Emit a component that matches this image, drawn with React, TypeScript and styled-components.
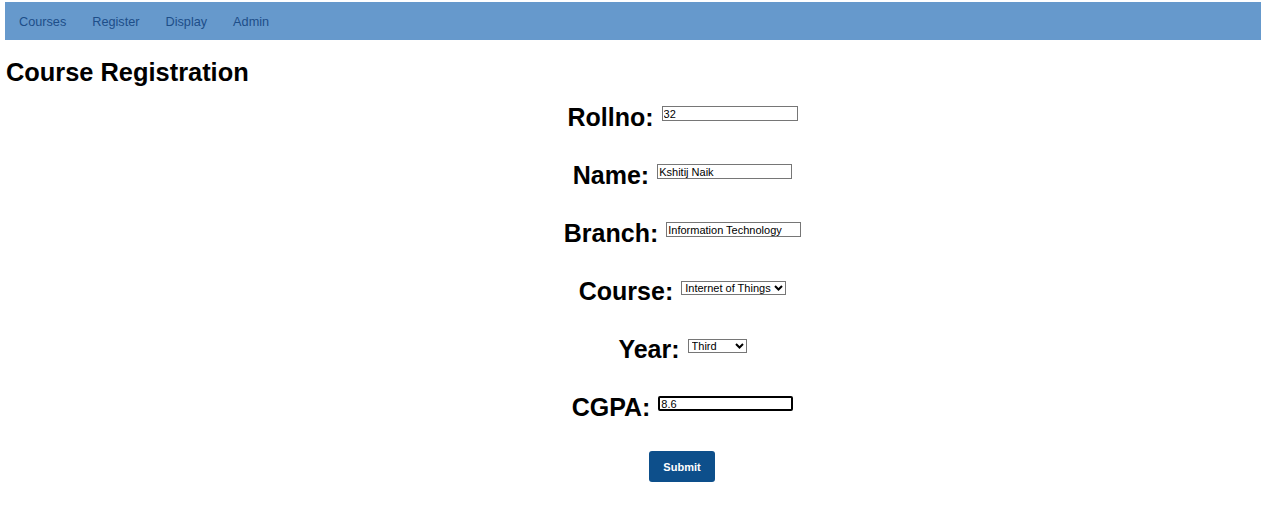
import React from "react";
import styled, { createGlobalStyle } from "styled-components";

const Global = createGlobalStyle`
  html, body { margin: 0; padding: 0; background: #fff; }
  body { font-family: "Liberation Sans", Arial, sans-serif; color: #000; }
`;

const Nav = styled.nav`
  display: flex;
  align-items: center;
  box-sizing: border-box;
  height: 38px;
  margin: 2px 0 0 5px;
  padding: 2px 0 0 1px;
  background: #6699cc;
`;

const NavLink = styled.a`
  padding: 0 13px;
  font-size: 12.7px;
  color: #1d4e89;
  text-decoration: none;
  cursor: pointer;
`;

const Heading = styled.h2`
  margin: 20px 0 0 6px;
  font-size: 25.4px;
  line-height: 25px;
  font-weight: bold;
`;

const Form = styled.form`
  display: flex;
  flex-direction: column;
  align-items: center;
  padding: 20px 0 0 104px;
  gap: 33px;
`;

const Row = styled.div`
  display: flex;
  align-items: flex-start;
  gap: 8px;
`;

const Label = styled.label`
  font-size: 25px;
  line-height: 25px;
  font-weight: bold;
`;

const TextInput = styled.input<{ $w: number; $focused?: boolean }>`
  box-sizing: border-box;
  width: ${(p) => p.$w}px;
  height: 15px;
  margin-top: 1px;
  padding: 0 1px;
  font-family: "Liberation Sans", Arial, sans-serif;
  font-size: 11px;
  color: #000;
  border: ${(p) => (p.$focused ? "2px solid #000" : "1px solid #767676")};
  border-radius: ${(p) => (p.$focused ? "2px" : "0")};
  outline: none;
  background: #fff;
`;

const SelectWrap = styled.div<{ $w: number }>`
  position: relative;
  width: ${(p) => p.$w}px;
  height: 14px;
  margin-top: 2px;
  font-size: 0;
  line-height: 0;
`;

const Select = styled.select`
  appearance: none;
  -webkit-appearance: none;
  display: block;
  box-sizing: border-box;
  width: 100%;
  height: 100%;
  margin: 0;
  padding: 0 0 0 3px;
  font-family: "Liberation Sans", Arial, sans-serif;
  font-size: 11px;
  line-height: 12px;
  color: #000;
  border: 1px solid #767676;
  border-radius: 0;
  background: #fff;
  outline: none;
`;

const Chevron = styled.svg`
  position: absolute;
  right: 3px;
  top: 4px;
  width: 9px;
  height: 6px;
  pointer-events: none;
`;

const Button = styled.button`
  width: 66px;
  height: 31px;
  margin: -2px 0 0 -1px;
  border: none;
  border-radius: 3px;
  background: #0d4f8b;
  color: #fff;
  font-family: "Liberation Sans", Arial, sans-serif;
  font-size: 11px;
  font-weight: bold;
  cursor: pointer;
`;

const Arrow = () => (
  <Chevron viewBox="0 0 9 6">
    <path d="M1 1 L4.5 4.5 L8 1" fill="none" stroke="#000" strokeWidth="2" />
  </Chevron>
);

export default function App() {
  return (
    <>
      <Global />
      <Nav>
        <NavLink>Courses</NavLink>
        <NavLink>Register</NavLink>
        <NavLink>Display</NavLink>
        <NavLink>Admin</NavLink>
      </Nav>
      <Heading>Course Registration</Heading>
      <Form onSubmit={(e) => e.preventDefault()}>
        <Row>
          <Label>Rollno:</Label>
          <TextInput $w={136} defaultValue="32" />
        </Row>
        <Row>
          <Label>Name:</Label>
          <TextInput $w={135} defaultValue="Kshitij Naik" />
        </Row>
        <Row>
          <Label>Branch:</Label>
          <TextInput $w={135} defaultValue="Information Technology" />
        </Row>
        <Row>
          <Label>Course:</Label>
          <SelectWrap $w={105}>
            <Select defaultValue="iot">
              <option value="iot">Internet of Things</option>
              <option value="ml">Machine Learning</option>
              <option value="cc">Cloud Computing</option>
            </Select>
            <Arrow />
          </SelectWrap>
        </Row>
        <Row>
          <Label>Year:</Label>
          <SelectWrap $w={59}>
            <Select defaultValue="third">
              <option value="first">First</option>
              <option value="second">Second</option>
              <option value="third">Third</option>
              <option value="fourth">Fourth</option>
            </Select>
            <Arrow />
          </SelectWrap>
        </Row>
        <Row>
          <Label>CGPA:</Label>
          <TextInput $w={135} $focused defaultValue="8.6" />
        </Row>
        <Button type="submit">Submit</Button>
      </Form>
    </>
  );
}
